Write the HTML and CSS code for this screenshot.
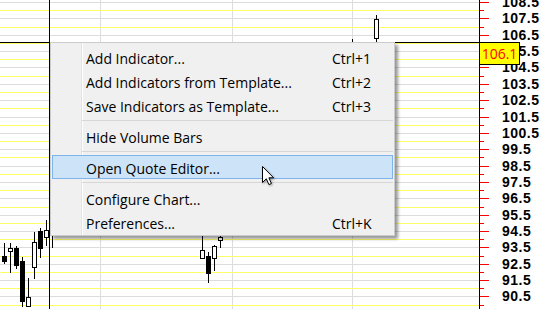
FILE: index.html
```html
<!DOCTYPE html>
<html lang="en">
<head>
  <meta charset="UTF-8" />
  <title>Chart - Context Menu</title>
  <link rel="stylesheet" href="styles.css">
</head>
<body>
  <div class="screen">
    <svg class="chart" id="chart" width="480" height="309" shape-rendering="crispEdges"></svg>

    <div class="axis">
      <svg class="ticks" id="ticks" width="22" height="309" shape-rendering="crispEdges"></svg>
      <div class="labels">
        <div class="label">108.5</div>
        <div class="label">107.5</div>
        <div class="label">106.5</div>
        <div class="label">105.5</div>
        <div class="label">104.5</div>
        <div class="label">103.5</div>
        <div class="label">102.5</div>
        <div class="label">101.5</div>
        <div class="label">100.5</div>
        <div class="label">99.5</div>
        <div class="label">98.5</div>
        <div class="label">97.5</div>
        <div class="label">96.5</div>
        <div class="label">95.5</div>
        <div class="label">94.5</div>
        <div class="label">93.5</div>
        <div class="label">92.5</div>
        <div class="label">91.5</div>
        <div class="label">90.5</div>
      </div>
    </div>

    <div class="price-tag">106.1</div>

    <div class="menu">
      <div class="menu-item"><span>Add Indicator...</span><span>Ctrl+1</span></div>
      <div class="menu-item"><span>Add Indicators from Template...</span><span>Ctrl+2</span></div>
      <div class="menu-item"><span>Save Indicators as Template...</span><span>Ctrl+3</span></div>
      <div class="menu-sep"></div>
      <div class="menu-item"><span>Hide Volume Bars</span></div>
      <div class="menu-sep"></div>
      <div class="menu-item active"><span>Open Quote Editor...</span></div>
      <div class="menu-sep"></div>
      <div class="menu-item"><span>Configure Chart...</span></div>
      <div class="menu-item"><span>Preferences...</span><span>Ctrl+K</span></div>
    </div>

    <svg class="cursor" width="14" height="21" viewBox="0 0 14 21">
      <path d="M0.5 0.5 V16.5 L4.3 12.8 L6.9 18.6 L9.4 17.5 L6.9 11.8 H11.6 Z" fill="#fff" stroke="#000" stroke-width="1" stroke-linejoin="miter" />
    </svg>
  </div>

  <script>
    const NS = "http://www.w3.org/2000/svg";
    const chart = document.getElementById("chart");
    const ticks = document.getElementById("ticks");

    function line(svg, x1, y1, x2, y2, color) {
      const l = document.createElementNS(NS, "line");
      l.setAttribute("x1", x1);
      l.setAttribute("y1", y1);
      l.setAttribute("x2", x2);
      l.setAttribute("y2", y2);
      l.setAttribute("stroke", color);
      svg.appendChild(l);
    }

    // rows for .5 prices (gray) and whole prices (yellow)
    function halfRow(i) { return Math.round(2 + i * 16.36) + 0.5; }
    function wholeRow(i) { return Math.round(2 + (i - 0.5) * 16.36) + 0.5; }

    [100, 232, 352].forEach(x => line(chart, x + 0.5, 0, x + 0.5, 309, "#dcdcdc"));

    for (let i = 0; i < 19; i++) {
      line(chart, 0, halfRow(i), 479, halfRow(i), "#dcdcdc");
      line(ticks, 0, halfRow(i), 9, halfRow(i), "#ff0000");
    }
    for (let i = 1; i < 20; i++) {
      line(chart, 0, wholeRow(i), 479, wholeRow(i), "#ffff66");
      line(ticks, 0, wholeRow(i), 4, wholeRow(i), "#ff0000");
    }

    // [center x, body top, body bottom, wick top, wick bottom, filled]
    const candles = [
      [4, 256, 261, 243, 263, true],
      [10, 248, 251, 243, 272, false],
      [16, 248, 265, 246, 268, true],
      [22, 261, 301, 257, 306, true],
      [28, 297, 306, 278, 306, false],
      [34, 242, 267, 232, 278, false],
      [40, 231, 248, 228, 257, true],
      [46, 230, 237, 220, 245, false],
      [52, 225, 234, 220, 247, true],
      [202, 250, 258, 225, 258, false],
      [208, 256, 273, 252, 282, true],
      [214, 246, 258, 245, 270, false],
      [220, 237, 240, 228, 247, false],
      [376, 19, 38, 15, 41, false]
    ];

    candles.forEach(([cx, top, bottom, wTop, wBottom, filled]) => {
      line(chart, cx + 0.5, wTop, cx + 0.5, wBottom + 1, "#000");
      const r = document.createElementNS(NS, "rect");
      r.setAttribute("x", cx - 2 + 0.5);
      r.setAttribute("y", top + 0.5);
      r.setAttribute("width", 4);
      r.setAttribute("height", bottom - top);
      r.setAttribute("fill", filled ? "#000" : "#fff");
      r.setAttribute("stroke", "#000");
      chart.appendChild(r);
    });

    line(chart, 352.5, 39, 352.5, 43, "#000");

    // crosshair and price axis
    line(chart, 49.5, 0, 49.5, 309, "#000");
    line(chart, 0, 42.5, 479, 42.5, "#000");
    line(chart, 479.5, 0, 479.5, 309, "#000");
  </script>
</body>
</html>
```

FILE: styles.css
```css
* {
  box-sizing: border-box;
}

body {
  margin: 0;
  background: #fff;
  font-family: "Open Sans", "Noto Sans", sans-serif;
  color: #000;
}

.screen {
  position: relative;
  display: flex;
  width: 560px;
  height: 309px;
  overflow: hidden;
  background: #fff;
}

.chart {
  display: block;
  flex: none;
}

.axis {
  display: flex;
  flex: none;
  width: 80px;
}

.ticks {
  display: block;
  flex: none;
}

.labels {
  display: flex;
  flex-direction: column;
  margin-top: -6px;
  font-family: "Liberation Sans", Arial, sans-serif;
  font-size: 14px;
  font-weight: 700;
  letter-spacing: 0.5px;
}

.label {
  height: 16.36px;
  line-height: 16.36px;
  flex: none;
}

/* price marker on the axis */
.price-tag {
  position: absolute;
  left: 479px;
  top: 42px;
  width: 41px;
  height: 23px;
  border: 1px solid #000;
  background: #ffff00;
  color: #ff0000;
  font-size: 14px;
  line-height: 21px;
  text-align: center;
}

/* context menu */
.menu {
  position: absolute;
  left: 50px;
  top: 42px;
  width: 345px;
  padding: 2px 1px 1px;
  border: 1px solid #cccccc;
  background-color: #f0f0f0;
  background-image: linear-gradient(90deg, transparent 30px, #e2e3e3 30px, #e2e3e3 31px, #ffffff 31px, #ffffff 32px, transparent 32px);
  box-shadow: 3px 3px 3px rgba(0, 0, 0, 0.4);
  font-size: 14px;
}

.menu-item {
  display: grid;
  grid-template-columns: 246px auto;
  align-items: center;
  height: 24px;
  padding: 2px 0 0 33px;
  border: 1px solid transparent;
  white-space: nowrap;
}

.menu-item.active {
  background: #cde3f7;
  border-color: #7eb4ea;
}

.menu-sep {
  height: 1px;
  margin: 3px 0 3px 30px;
  background: #d7d7d7;
}

.cursor {
  position: absolute;
  left: 262px;
  top: 166px;
  filter: drop-shadow(1px 1px 1px rgba(0, 0, 0, 0.35));
}
```
